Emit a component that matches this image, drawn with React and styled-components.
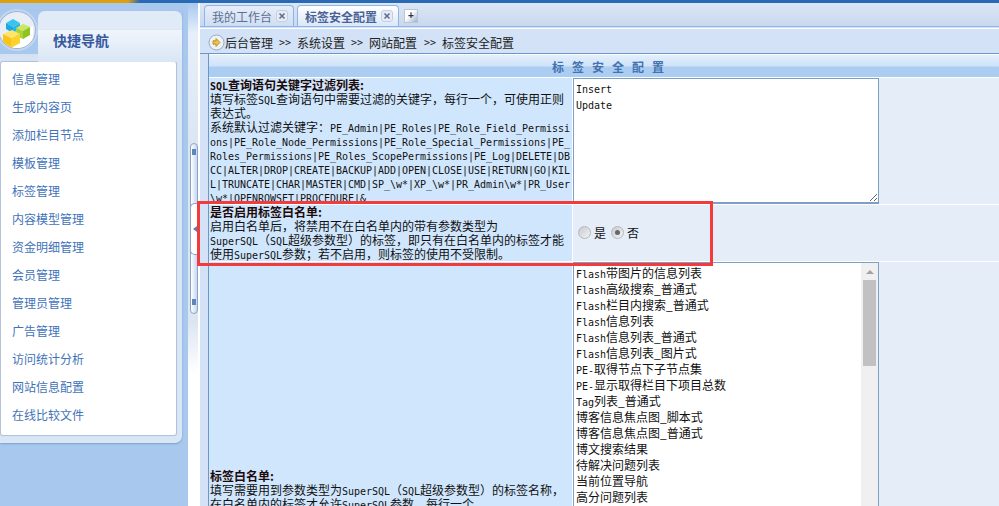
import React from 'react';
import styled, { createGlobalStyle } from 'styled-components';

const GlobalStyle = createGlobalStyle`
  html, body { margin: 0; padding: 0; height: 100%; overflow: hidden; }
  body { font-family: "Noto Sans CJK SC", "Liberation Sans", sans-serif; font-size: 12px; }
`;

const NAV_ITEMS = [
  '信息管理', '生成内容页', '添加栏目节点', '模板管理', '标签管理', '内容模型管理', '资金明细管理',
  '会员管理', '管理员管理', '广告管理', '访问统计分析', '网站信息配置', '在线比较文件',
];

const LIST_ITEMS = [
  ['Flash', '带图片的信息列表'], ['Flash', '高级搜索_普通式'], ['Flash', '栏目内搜索_普通式'],
  ['Flash', '信息列表'], ['Flash', '信息列表_普通式'], ['Flash', '信息列表_图片式'],
  ['PE-', '取得节点下子节点集'], ['PE-', '显示取得栏目下项目总数'], ['Tag', '列表_普通式'],
  ['', '博客信息焦点图_脚本式'], ['', '博客信息焦点图_普通式'], ['', '博文搜索结果'],
  ['', '待解决问题列表'], ['', '当前位置导航'], ['', '高分问题列表'],
];

const Page = styled.div`
  position: relative;
  width: 999px;
  height: 506px;
  overflow: hidden;
  background: #a8c8ee;
`;

const TopStrip = styled.div`
  height: 3px;
  background: linear-gradient(100deg, #dfa010 0, #dfa010 126px, #2a69b4 138px, #2a69b4 100%);
`;

const Body = styled.div`
  display: flex;
  height: 503px;
`;

const Sidebar = styled.aside`
  width: 188px;
  flex: none;
  padding-top: 8px;
  box-sizing: border-box;
  background: #a8c8ee;
`;

const SidePanel = styled.div`
  width: 182px;
  height: 432px;
  box-sizing: border-box;
  border-radius: 0 0 7px 0;
  background: #d9e6f5;
  box-shadow: 0 1px 2px #7f9fd0;
`;

const SideHead = styled.div`
  display: flex;
  height: 51px;
  align-items: flex-end;
  background: linear-gradient(#a8c8ee 0, #a8c8ee 43px, #d3e1f3 43px, #d9e6f5 100%);
`;

const LogoDisc = styled.div`
  width: 36px;
  height: 36px;
  flex: none;
  margin: 0 0 13px -2px;
  border-radius: 50%;
  border: 1px solid #9fb3d0;
  box-shadow: 0 0 0 2px #c3d6f0;
  background: #e8eef7;
  overflow: hidden;
`;

const SideTitleBox = styled.div`
  flex: 1;
  height: 51px;
  margin-left: 2px;
  padding: 19px 0 0 15px;
  box-sizing: border-box;
  border-radius: 7px 7px 0 0;
  background: linear-gradient(#e1ebf7 0, #e1ebf7 18px, #c9d9ee 18px, #f0f5fb 19px, #d9e6f5 100%);
  color: #35589f;
  font-size: 14px;
  line-height: 20px;
  font-weight: 700;
`;

const NavList = styled.ul`
  list-style: none;
  margin: 0 0 0 1px;
  padding: 3px 0 0;
  width: 175px;
  height: 373px;
  box-sizing: border-box;
  border-radius: 2px;
  background: #fff;
  box-shadow: 0 0 1px 1px #aebfd6;
`;

const NavItem = styled.li`
  height: 28px;
  padding-left: 11px;
  line-height: 28px;
  color: #3f73b9;
  font-size: 12px;
`;

const Splitter = styled.div`
  display: flex;
  width: 12px;
  flex: none;
  align-items: flex-start;
  padding: 140px 0 0 2px;
  box-sizing: border-box;
  border-right: 2px solid #fff;
  background: linear-gradient(#a8c8ee 0, #e6effa 30px, #dce6f2 140px, #dce6f2 320px, #fff 370px);
`;

const SplitHandle = styled.div`
  position: relative;
  width: 8px;
  height: 171px;
  box-sizing: border-box;
  border: 1px solid #8ea5c8;
  border-radius: 4px;
  background: linear-gradient(90deg, #fff, #c4d8f0);
`;

const SplitDots = styled.div`
  position: absolute;
  left: 1px;
  top: ${(p) => p.$top}px;
  width: 4px;
  height: 6px;
  background: radial-gradient(circle, #5f86b8 0.8px, transparent 1px) 0 0 / 2px 2px;
`;

const SplitTongue = styled.div`
  position: absolute;
  left: -1px;
  top: 59px;
  width: 8px;
  height: 50px;
  display: flex;
  align-items: center;
  justify-content: center;
  border: 1px solid #8ea5c8;
  border-right: 0;
  border-radius: 5px 0 0 5px;
  background: #fff;
  &::after {
    content: '';
    border: 3px solid transparent;
    border-left: 0;
    border-right: 4px solid #5a7fae;
  }
`;

const Main = styled.main`
  flex: 1;
  min-width: 0;
  background: #d3e2f6;
`;

const TabBar = styled.div`
  display: flex;
  height: 24px;
  box-sizing: border-box;
  align-items: flex-end;
  gap: 3px;
  padding-left: 4px;
  border-bottom: 1px solid #8fb4e6;
  background: linear-gradient(#dbe7f6, #c9d8ee);
`;

const Tab = styled.div`
  display: flex;
  width: ${(p) => p.$w}px;
  height: 21px;
  box-sizing: border-box;
  align-items: center;
  justify-content: space-between;
  padding: 0 5px 0 7px;
  border: 1px solid #8fb4e6;
  border-bottom: 0;
  border-radius: 4px 4px 0 0;
  color: ${(p) => (p.$active ? '#4a6396' : '#5c6f94')};
  font-size: 12px;
  font-weight: ${(p) => (p.$active ? 700 : 400)};
  white-space: nowrap;
  background: ${(p) => (p.$active ? 'linear-gradient(#fff, #dbe8f9)' : 'linear-gradient(#e6eef9, #cfdef2)')};
`;

const CloseBox = styled.span`
  display: flex;
  width: 10px;
  height: 10px;
  align-items: center;
  justify-content: center;
  border-radius: 3px;
  border: 1px solid #c5cfdf;
  background: #e6ecf6;
`;

const AddTab = styled.div`
  display: flex;
  width: 14px;
  height: 14px;
  box-sizing: border-box;
  align-items: center;
  justify-content: center;
  margin: 0 0 3px 2px;
  border: 1px solid #b9c6da;
  background: linear-gradient(135deg, #fff 40%, #9fb2d0);
  color: #334;
  font: 700 10px/1 "Liberation Sans", sans-serif;
`;

const WhiteRule = styled.div`
  height: 3px;
  background: linear-gradient(#d3e2f6 1px, #fff 1px, #fff 2px, #d3e2f6 2px);
`;

const Breadcrumb = styled.div`
  display: flex;
  height: 24px;
  box-sizing: border-box;
  align-items: center;
  padding: 1px 0 0 8px;
  color: #222;
  font-size: 12px;
  border-bottom: 1px solid #6a97c8;
`;

const Crumb = styled.span`
  width: ${(p) => p.$w}px;
  flex: none;
  white-space: nowrap;
`;

const Arrows = styled.span`
  width: 25px;
  flex: none;
  padding-left: 7px;
  box-sizing: border-box;
  font: 10px "DejaVu Sans Mono", monospace;
`;

const Content = styled.div`
  margin-left: 8px;
  height: 452px;
  overflow: hidden;
  border-left: 1px solid #6a97c8;
  background: #fff;
`;

const Caption = styled.div`
  height: 22px;
  margin-top: 1px;
  padding-left: 343px;
  box-sizing: border-box;
  background: linear-gradient(#e3effc 0, #cfe3fa 11px, #abcdf2 12px, #abcdf2 100%);
  color: #4273b0;
  font-size: 12px;
  font-weight: 700;
  line-height: 24px;
  letter-spacing: 8px;
  white-space: nowrap;
`;

const Row = styled.div`
  display: grid;
  grid-template-columns: 363px 1fr;
  height: ${(p) => p.$h}px;
  margin-top: 1px;
  column-gap: 1px;
`;

const LeftCell = styled.div`
  display: flex;
  flex-direction: column;
  overflow: hidden;
  padding: ${(p) => p.$top || 0}px 0 0 1px;
  background: #d0e6fd;
  color: #111;
  font-size: 12px;
  line-height: 14px;
`;

const RightCell = styled.div`
  display: flex;
  overflow: hidden;
  background: #e5edf8;
  align-items: ${(p) => (p.$center ? 'center' : 'flex-start')};
  padding: ${(p) => (p.$center ? '0 0 0 5px' : '0')};
`;

const Line = styled.div`
  height: 14px;
  flex: none;
  white-space: nowrap;
`;

const Heading = styled(Line)`
  font-weight: 700;
  color: #1c0a0a;
`;

const Latin = styled.span`
  font-family: "DejaVu Sans Mono", monospace;
  font-size: 10px;
  letter-spacing: -0.02px;
`;

const ConfigArea = styled.textarea`
  display: block;
  width: 306px;
  height: 126px;
  box-sizing: border-box;
  margin: 0;
  padding: 3px 2px 0;
  border: 1px solid #7d9fc5;
  border-bottom-width: 2px;
  border-radius: 0;
  outline: 0;
  background: #fff;
  color: #111;
  font-family: "DejaVu Sans Mono", monospace;
  font-size: 10px;
  line-height: 16px;
  resize: both;
  overflow: auto;
`;

const RadioGroup = styled.label`
  display: flex;
  align-items: center;
  gap: 3px;
  margin: 0 5px 2px 0;
  color: #111;
  font-size: 12px;
`;

const Radio = styled.span`
  display: flex;
  width: 13px;
  height: 13px;
  box-sizing: border-box;
  align-items: center;
  justify-content: center;
  border-radius: 50%;
  border: 1px solid #b4b8bc;
  background: linear-gradient(135deg, #c6c9cd, #f4f4f4);
  &::after {
    content: '';
    display: ${(p) => (p.$checked ? 'block' : 'none')};
    width: 5px;
    height: 5px;
    border-radius: 50%;
    background: #666;
  }
`;

const ListBox = styled.div`
  display: flex;
  width: 306px;
  height: 260px;
  box-sizing: border-box;
  border: 1px solid #7d9fc5;
  border-bottom: 0;
  background: #fff;
`;

const ListLines = styled.div`
  flex: 1;
  padding: 2px 0 0 2px;
  color: #111;
  font-size: 12px;
  line-height: 16px;
`;

const ListLine = styled.div`
  height: 16px;
  white-space: nowrap;
`;

const ScrollTrack = styled.div`
  display: flex;
  width: 17px;
  flex: none;
  flex-direction: column;
  align-items: center;
  background: #f0f0f0;
`;

const ScrollArrow = styled.div`
  width: 0;
  height: 0;
  margin: 7px 0 6px;
  border: 4px solid transparent;
  border-top: 0;
  border-bottom: 4px solid #a3a3a3;
`;

const ScrollThumb = styled.div`
  width: 13px;
  height: 86px;
  background: #c1c1c1;
`;

const Highlight = styled.div`
  position: absolute;
  left: 197px;
  top: 201px;
  width: 516px;
  height: 65px;
  box-sizing: border-box;
  border: 3px solid #f33b3b;
  pointer-events: none;
`;

const CubeLogo = () => (
  <svg width="36" height="36" viewBox="0 0 36 36">
    <polygon points="2,30 34,14 34,36 2,36" fill="#fff" />
    <polygon points="7,11 14,7 21,11 14,15" fill="#35c5ee" />
    <polygon points="7,11 14,15 14,21 7,17" fill="#1ea7e0" />
    <polygon points="14,15 21,11 21,17 14,21" fill="#28b5e8" />
    <polygon points="17,16 24,12 31,15 24,19" fill="#c8e860" />
    <polygon points="24,19 31,15 31,23 24,27" fill="#8fc31f" />
    <polygon points="17,16 24,19 24,27 17,24" fill="#a9d43c" />
    <polygon points="4,22 13,18 21,22 12,26" fill="#ffe56a" />
    <polygon points="4,22 12,26 12,36 4,32" fill="#f9c416" />
    <polygon points="12,26 21,22 21,31 12,36" fill="#fbd22e" />
  </svg>
);

const CloseIcon = () => (
  <svg width="8" height="8" viewBox="0 0 8 8">
    <path d="M1.5 1.5l5 5M6.5 1.5l-5 5" stroke="#5a6c8f" strokeWidth="1.5" />
  </svg>
);

const CrumbIcon = () => (
  <svg width="17" height="17" viewBox="0 0 17 17" style={{ flex: 'none' }}>
    <circle cx="8.5" cy="8.5" r="7.5" fill="#eef2f7" stroke="#9aa9bd" />
    <path d="M8 4.5l4 4-4 4v-2.3H5V6.8h3z" fill="#f0c23c" stroke="#a8822a" strokeWidth=".8" />
  </svg>
);

export default function App() {
  return (
    <Page>
      <GlobalStyle />
      <TopStrip />
      <Body>
        <Sidebar>
          <SidePanel>
            <SideHead>
              <LogoDisc><CubeLogo /></LogoDisc>
              <SideTitleBox>快捷导航</SideTitleBox>
            </SideHead>
            <NavList>
              {NAV_ITEMS.map((item) => <NavItem key={item}>{item}</NavItem>)}
            </NavList>
          </SidePanel>
        </Sidebar>
        <Splitter>
          <SplitHandle>
            <SplitDots $top={5} />
            <SplitTongue />
            <SplitDots $top={155} />
          </SplitHandle>
        </Splitter>
        <Main>
          <TabBar>
            <Tab $w={90}>我的工作台<CloseBox><CloseIcon /></CloseBox></Tab>
            <Tab $active $w={102}>标签安全配置<CloseBox><CloseIcon /></CloseBox></Tab>
            <AddTab>+</AddTab>
          </TabBar>
          <WhiteRule />
          <Breadcrumb>
            <CrumbIcon />
            <Crumb $w={47}>后台管理</Crumb><Arrows>&gt;&gt;</Arrows>
            <Crumb $w={47}>系统设置</Crumb><Arrows>&gt;&gt;</Arrows>
            <Crumb $w={48}>网站配置</Crumb><Arrows>&gt;&gt;</Arrows>
            <Crumb $w={72}>标签安全配置</Crumb>
          </Breadcrumb>
          <Content>
            <Caption>标签安全配置</Caption>
            <Row $h={126}>
              <LeftCell>
                <Heading><Latin>SQL</Latin>查询语句关键字过滤列表:</Heading>
                <Line>填写标签<Latin>SQL</Latin>查询语句中需要过滤的关键字，每行一个，可使用正则</Line>
                <Line>表达式。</Line>
                <Line>系统默认过滤关键字：<Latin>PE_Admin|PE_Roles|PE_Role_Field_Permissi</Latin></Line>
                <Line><Latin>ons|PE_Role_Node_Permissions|PE_Role_Special_Permissions|PE_</Latin></Line>
                <Line><Latin>Roles_Permissions|PE_Roles_ScopePermissions|PE_Log|DELETE|DB</Latin></Line>
                <Line><Latin>CC|ALTER|DROP|CREATE|BACKUP|ADD|OPEN|CLOSE|USE|RETURN|GO|KIL</Latin></Line>
                <Line><Latin>L|TRUNCATE|CHAR|MASTER|CMD|SP_\w*|XP_\w*|PR_Admin\w*|PR_User</Latin></Line>
                <Line><Latin>\w*|OPENROWSET|PROCEDURE|&amp;</Latin></Line>
              </LeftCell>
              <RightCell>
                <ConfigArea readOnly defaultValue={'Insert\nUpdate'} />
              </RightCell>
            </Row>
            <Row $h={56}>
              <LeftCell>
                <Heading>是否启用标签白名单:</Heading>
                <Line>启用白名单后，将禁用不在白名单内的带有参数类型为</Line>
                <Line><Latin>SuperSQL</Latin>（<Latin>SQL</Latin>超级参数型）的标签，即只有在白名单内的标签才能</Line>
                <Line>使用<Latin>SuperSQL</Latin>参数；若不启用，则标签的使用不受限制。</Line>
              </LeftCell>
              <RightCell $center>
                <RadioGroup><Radio />是</RadioGroup>
                <RadioGroup><Radio $checked />否</RadioGroup>
              </RightCell>
            </Row>
            <Row $h={260}>
              <LeftCell $top={207}>
                <Heading>标签白名单:</Heading>
                <Line>填写需要用到参数类型为<Latin>SuperSQL</Latin>（<Latin>SQL</Latin>超级参数型）的标签名称，</Line>
                <Line>在白名单内的标签才允许<Latin>SuperSQL</Latin>参数，每行一个。</Line>
              </LeftCell>
              <RightCell>
                <ListBox>
                  <ListLines>
                    {LIST_ITEMS.map(([latin, text]) => (
                      <ListLine key={latin + text}><Latin>{latin}</Latin>{text}</ListLine>
                    ))}
                  </ListLines>
                  <ScrollTrack>
                    <ScrollArrow />
                    <ScrollThumb />
                  </ScrollTrack>
                </ListBox>
              </RightCell>
            </Row>
          </Content>
        </Main>
      </Body>
      <Highlight />
    </Page>
  );
}
